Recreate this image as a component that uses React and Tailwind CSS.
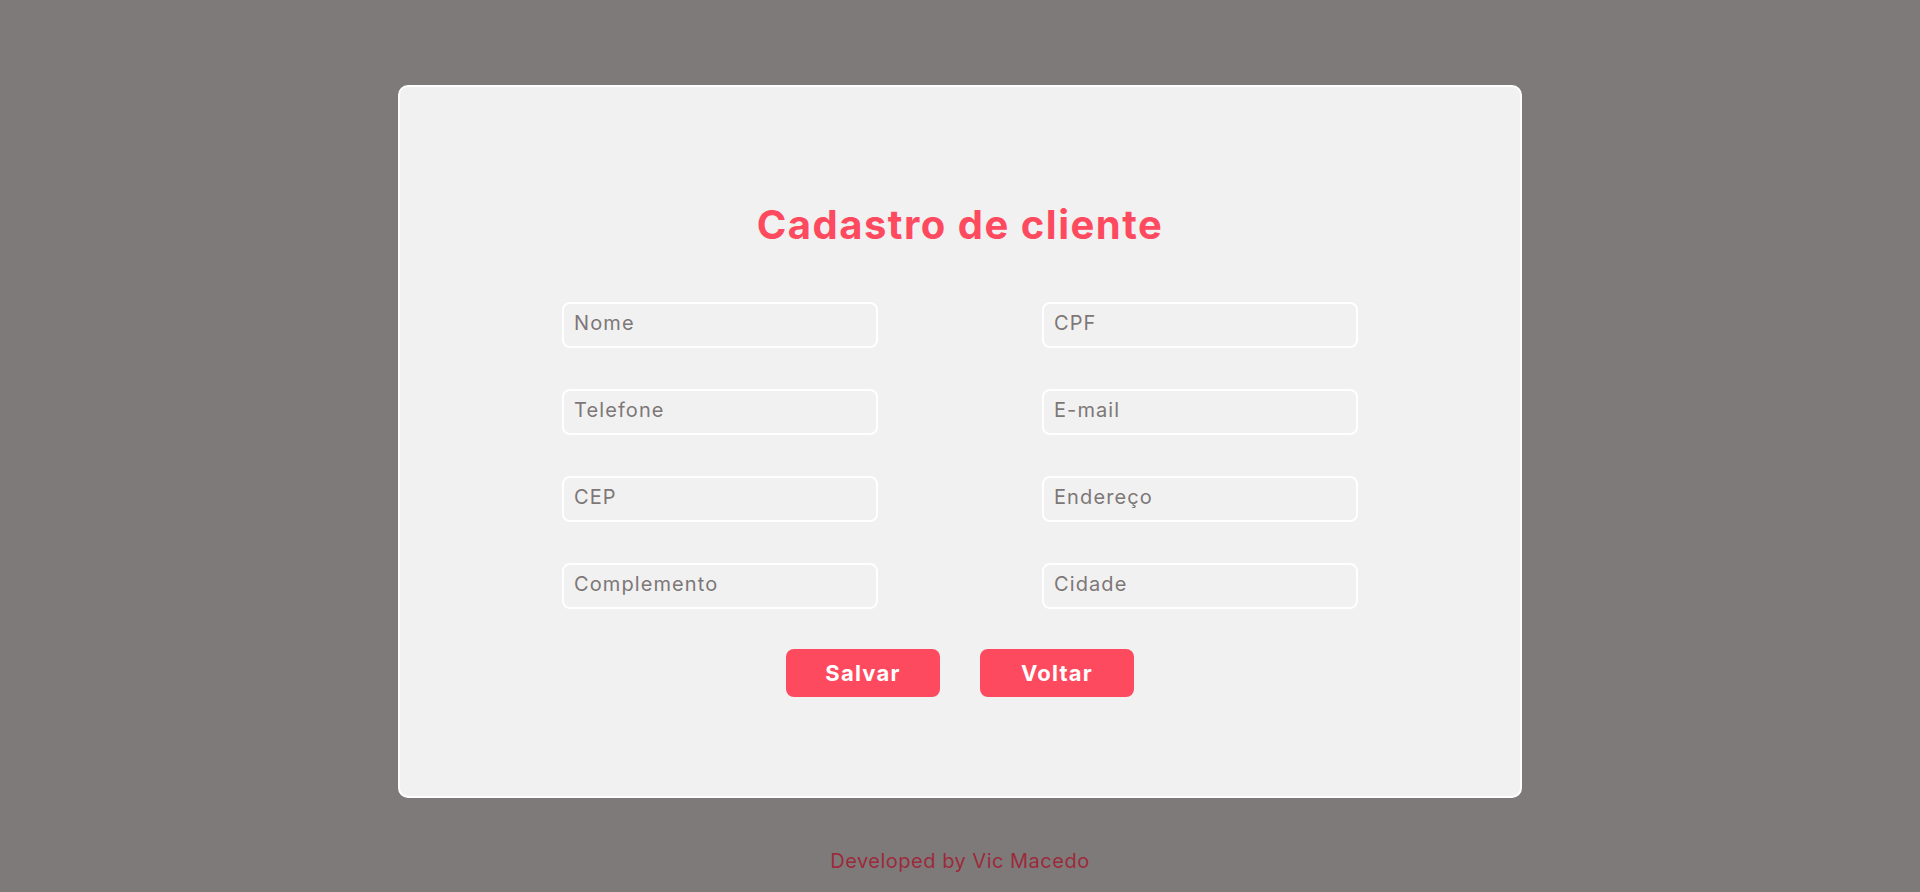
const fields = [
  ['Nome', 'CPF'],
  ['Telefone', 'E-mail'],
  ['CEP', 'Endereço'],
  ['Complemento', 'Cidade'],
];

const inputClass =
  'w-[316px] h-[46px] px-[10px] pb-[4px] rounded-[8px] border-2 border-white bg-transparent text-[20px] tracking-[1.1px] text-[#555] placeholder:text-[#7d7777] outline-none';

const btnClass =
  'w-[154px] h-[48px] rounded-[8px] bg-[#fe4a5f] text-white text-[22px] tracking-[1.2px] font-bold';

export default function App() {
  return (
    <div
      className="min-h-screen bg-[#7f7a7a] flex flex-col items-center pt-[85px]"
      style={{ fontFamily: 'Inter, "DejaVu Sans", sans-serif' }}
    >
      {/* Card */}
      <div className="w-[1124px] h-[713px] bg-[#f1f1f1] border-2 border-white rounded-[10px] flex flex-col items-center pt-[118px]">
        <h1 className="text-[40px] leading-[40px] tracking-[1.5px] font-bold text-[#fe4a5f]">
          Cadastro de cliente
        </h1>

        <form className="mt-[57px] flex flex-col items-center">
          <div className="grid grid-cols-2 gap-x-[164px] gap-y-[41px]">
            {fields.flat().map((f) => (
              <input key={f} type="text" placeholder={f} className={inputClass} />
            ))}
          </div>

          <div className="mt-[40px] flex gap-[40px]">
            <button type="button" className={btnClass}>
              Salvar
            </button>
            <button type="button" className={btnClass}>
              Voltar
            </button>
          </div>
        </form>
      </div>

      {/* Footer */}
      <p className="mt-[51px] text-[20px] leading-[24px] tracking-[0.5px] text-[#9c2a3a]">
        Developed by Vic Macedo
      </p>
    </div>
  );
}
